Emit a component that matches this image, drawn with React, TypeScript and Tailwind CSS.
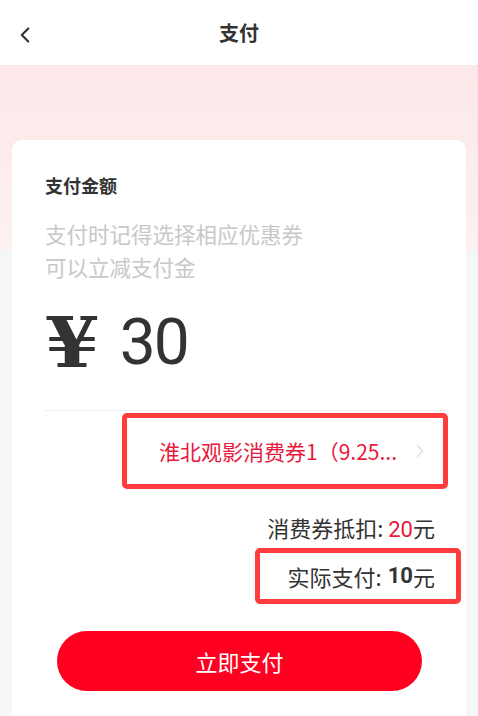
import { ChevronLeft, ChevronRight } from "lucide-react";

const cjk = "font-['Noto_Sans_CJK_SC','Noto_Sans',sans-serif]";

export default function App() {
  return (
    <div className={`min-h-[716px] w-full overflow-hidden bg-white ${cjk} text-[#333]`}>
      {/* header */}
      <header className="relative flex h-[65px] items-center justify-center bg-white">
        <ChevronLeft className="absolute left-[12px] top-[22px] h-[26px] w-[26px] text-[#333]" strokeWidth={2} />
        <h1 className="text-[20px] font-bold leading-none text-[#333]">支付</h1>
      </header>

      <main className="min-h-[651px] bg-[linear-gradient(to_bottom,#fde7e8_0px,#fdeeee_130px,#fdf1f1_184px,#f5f6f8_186px)] px-[12px] pt-[75px]">
        <div className="min-h-[600px] rounded-[10px] bg-white pl-[33px] pr-[18px] pt-[33px]">
          <h2 className="text-[18px] font-bold leading-[24px] text-[#333]">支付金额</h2>
          <p className="mt-[20px] text-[21.5px] leading-[33px] text-[#c8c8c8]">
            支付时记得选择相应优惠券
            <br />
            可以立减支付金
          </p>

          <div className="mt-[22px] flex h-[90px] items-baseline">
            <span className="inline-block origin-left scale-x-[1.12] translate-y-[3px] font-['DejaVu_Serif',serif] text-[70px] font-bold leading-none">¥</span>
            <span className="ml-[26px] font-['Roboto',sans-serif] text-[64px] font-normal leading-none tracking-[-2px]">30</span>
          </div>

          <div className="mt-[15px] h-px bg-[#efefef]" />

          {/* coupon row */}
          <div className="ml-auto mt-[2px] flex h-[76px] w-[326px] items-center rounded-[5px] border-[5px] border-[#ff3b3b] pl-[32px]">
            <span className="text-[21px] leading-none text-[#e8193c]">淮北观影消费券1（9.25...</span>
            <ChevronRight className="ml-auto mr-[12px] h-[22px] w-[22px] text-[#dde0ea]" strokeWidth={1.5} />
          </div>

          <div className="mt-[24px] pr-[13px] text-right text-[22px] leading-[28px]">
            消费券抵扣: <span className="font-['Roboto',sans-serif] text-[#e8193c]">20</span>元
          </div>

          <div className="-mr-[13px] ml-auto mt-[4px] flex h-[56px] w-[206px] items-center justify-end rounded-[5px] border-[5px] border-[#ff3b3b] pr-[21px] text-[22px] leading-none">
            实际支付: <span className="ml-[6px] font-['Roboto',sans-serif] font-bold">10</span>元
          </div>

          <button className="ml-[12px] mt-[27px] flex h-[60px] w-[365px] items-center justify-center rounded-full bg-[#ff0020] text-[22px] text-white">
            立即支付
          </button>
        </div>
      </main>
    </div>
  );
}
